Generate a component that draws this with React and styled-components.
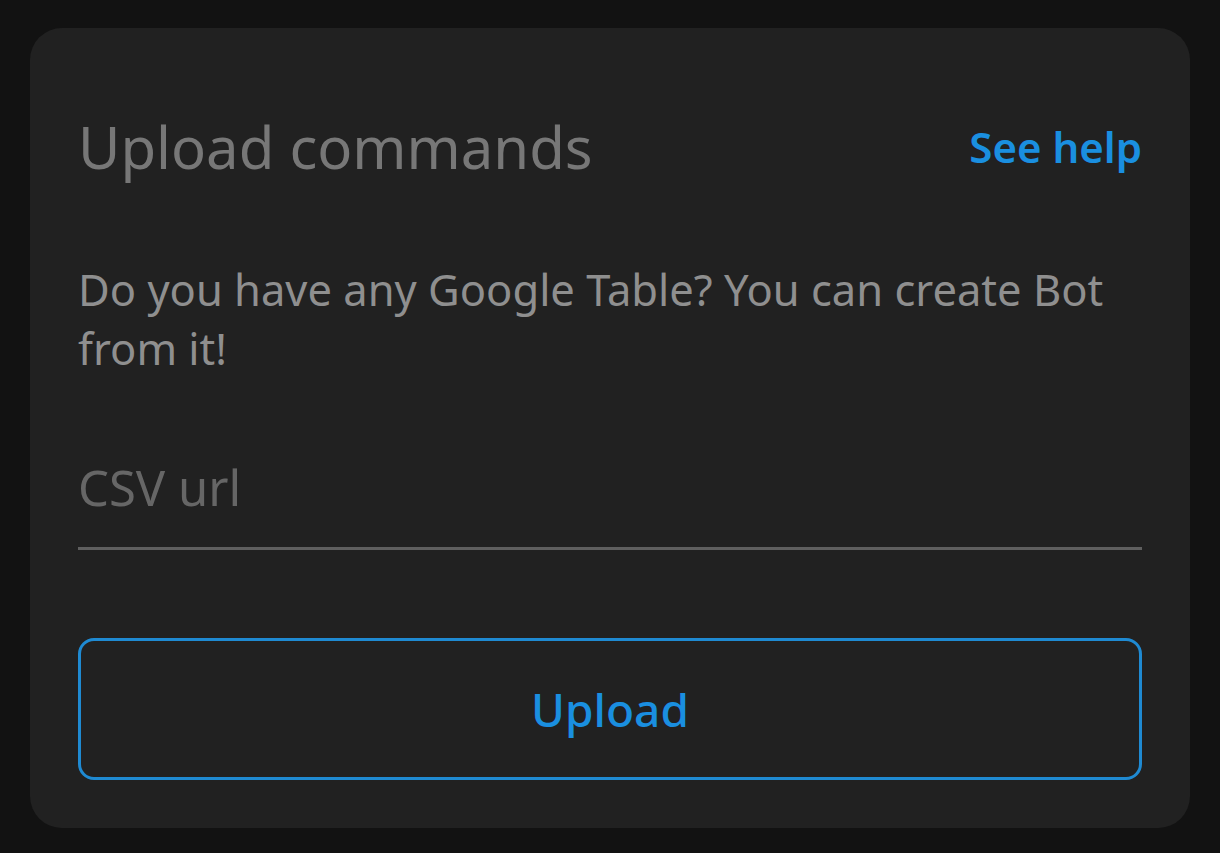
import styled, { createGlobalStyle } from "styled-components";

const GlobalStyle = createGlobalStyle`
  html, body {
    margin: 0;
    padding: 0;
    background: #121212;
  }
  body {
    font-family: "Noto Sans", "Inter", sans-serif;
  }
`;

const Page = styled.div`
  width: 1220px;
  height: 853px;
  padding: 28px 30px 25px;
  box-sizing: border-box;
  background: #121212;
`;

const Card = styled.section`
  height: 100%;
  background: #212121;
  border-radius: 32px;
  padding: 0 48px;
  box-sizing: border-box;
  display: flex;
  flex-direction: column;
`;

const Header = styled.div`
  display: flex;
  justify-content: space-between;
  align-items: center;
  height: 80px;
  margin-top: 78px;
`;

const Title = styled.h2`
  margin: 0;
  font-size: 58px;
  font-weight: 400;
  color: #777777;
`;

const HelpLink = styled.a`
  font-size: 42px;
  font-weight: 600;
  color: #1a8fe0;
  text-decoration: none;
`;

const Description = styled.p`
  margin: 74px 0 0;
  font-size: 43.5px;
  line-height: 59px;
  color: #8f8f8f;
`;

const Input = styled.input`
  margin-top: 76px;
  background: transparent;
  border: none;
  border-bottom: 3px solid #5f5f5f;
  padding: 0 0 27px;
  font-family: inherit;
  font-size: 49px;
  color: #bbbbbb;
  outline: none;

  &::placeholder {
    color: #666666;
  }
`;

const UploadButton = styled.button`
  margin-top: 88px;
  height: 142px;
  background: transparent;
  border: 3px solid #1f8ad2;
  border-radius: 16px;
  font-family: inherit;
  font-size: 46px;
  font-weight: 500;
  color: #1a8fe0;
  cursor: pointer;
`;

export default function App() {
  return (
    <>
      <GlobalStyle />
      <Page>
        <Card>
          <Header>
            <Title>Upload commands</Title>
            <HelpLink href="#">See help</HelpLink>
          </Header>
          <Description>
            Do you have any Google Table? You can create Bot from it!
          </Description>
          <Input placeholder="CSV url" />
          <UploadButton>Upload</UploadButton>
        </Card>
      </Page>
    </>
  );
}
